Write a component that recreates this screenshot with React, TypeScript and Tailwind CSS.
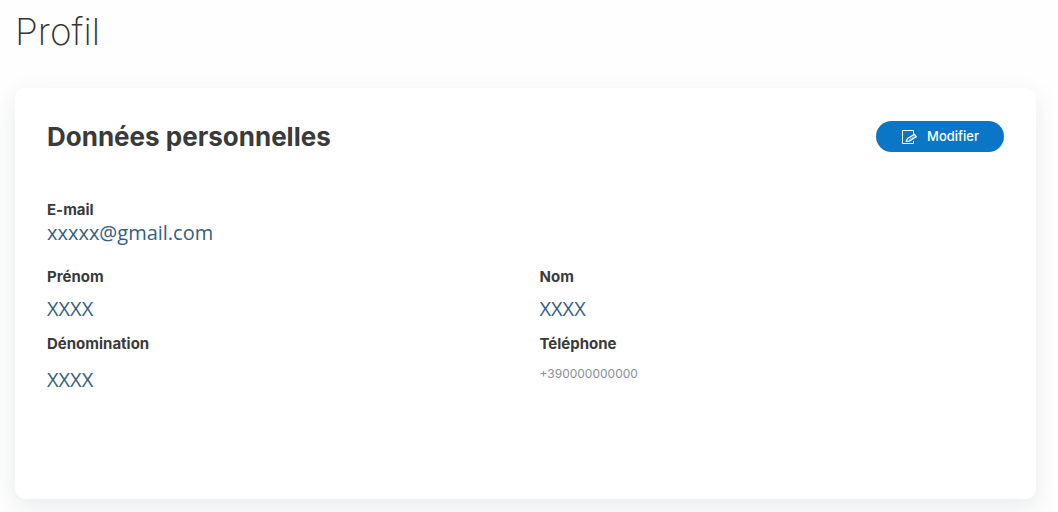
import type { ReactNode } from 'react';

interface FieldProps {
  label: string;
  className?: string;
  children: ReactNode;
}

function EditIcon() {
  return (
    <svg
      className="h-4 w-4"
      viewBox="0 0 16 16"
      fill="none"
      stroke="currentColor"
      strokeWidth="1"
      aria-hidden="true"
    >
      <path d="M12.5 5V1.5H1.5V14.5H12.5V12" />
      <path d="M5.2 12.4L6.4 9.6L13.4 5.4L15.2 7.8L8.2 12.1Z" strokeWidth="1.2" />
      <path d="M8 10.6L13.8 7.2" strokeWidth="0.5" />
    </svg>
  );
}

function Field({ label, className = '', children }: FieldProps) {
  return (
    <div className={className}>
      <dt className="text-[15px] leading-5 font-bold text-[#3a3a3a]">{label}</dt>
      {children}
    </div>
  );
}

export default function App() {
  return (
    <main className="min-h-screen bg-[#fefefe] pt-3 pr-[22px] pb-3 pl-[15px] font-['Inter',sans-serif]">
      <h1 className="text-[37px] leading-10 font-extralight text-[#333333]">Profil</h1>

      <section className="mt-9 rounded-[10px] bg-white px-8 pt-[33px] pb-[107px] shadow-[0_8px_24px_rgba(40,60,80,0.10)]">
        <div className="flex items-center justify-between">
          <h2 className="text-[26px] leading-[30px] font-bold text-[#3a3a3a]">Données personnelles</h2>
          <button
            type="button"
            className="flex h-[31px] w-32 items-center justify-center gap-2.5 rounded-full bg-[#0b76c6] text-[13px] font-medium text-white"
          >
            <EditIcon />
            Modifier
          </button>
        </div>

        <dl className="mt-12 grid grid-cols-2 gap-x-7">
          <Field label="E-mail" className="col-span-2 h-[67px]">
            <dd className="mt-px font-['Open_Sans',sans-serif] text-xl leading-6 text-[#35607f]">xxxxx@gmail.com</dd>
          </Field>
          <Field label="Prénom" className="h-[67px]">
            <dd className="mt-2.5 font-['Open_Sans',sans-serif] text-xl leading-6 text-[#35607f]">XXXX</dd>
          </Field>
          <Field label="Nom" className="h-[67px]">
            <dd className="mt-2.5 font-['Open_Sans',sans-serif] text-xl leading-6 text-[#35607f]">XXXX</dd>
          </Field>
          <Field label="Dénomination">
            <dd className="mt-3.5 font-['Open_Sans',sans-serif] text-xl leading-6 text-[#35607f]">XXXX</dd>
          </Field>
          <Field label="Téléphone">
            <dd className="mt-2 text-xs leading-6 text-[#8a8f94]">+390000000000</dd>
          </Field>
        </dl>
      </section>
    </main>
  );
}
